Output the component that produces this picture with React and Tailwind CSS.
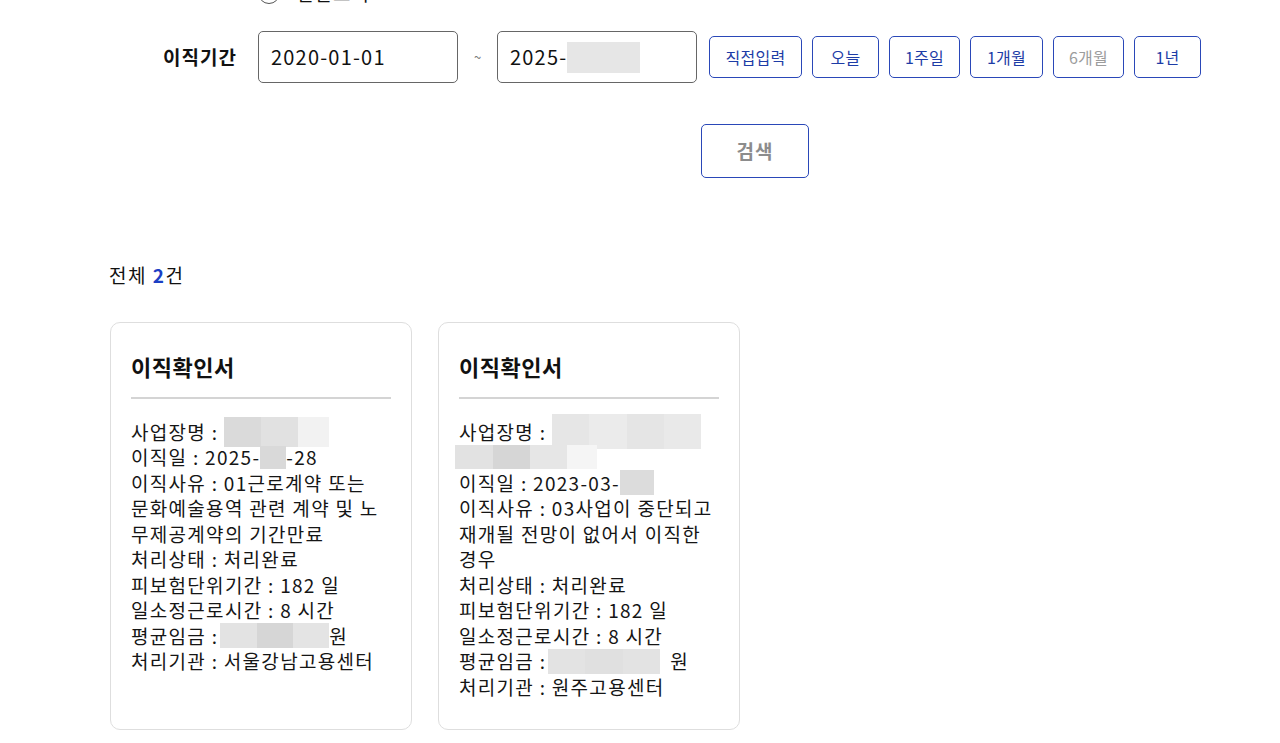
import React from 'react';

const font = "font-['Noto_Sans_CJK_KR','Noto_Sans',sans-serif]";

function Mosaic({ parts, h = 'h-[30px]', className = '' }) {
  return (
    <span className={`inline-flex shrink-0 ${h} ${className}`}>
      {parts.map(([w, c], i) => (
        <span key={i} className="h-full" style={{ width: w, background: c }} />
      ))}
    </span>
  );
}

function Line({ children, className = '' }) {
  return <div className={`flex h-[25.5px] items-center whitespace-nowrap ${className}`}>{children}</div>;
}

function RangeButton({ label, width, muted }) {
  return (
    <button
      type="button"
      className={`h-[42px] rounded-[5px] border border-[#2a48b8] bg-white text-[16px] tracking-[0.3px] ${
        muted ? 'text-[#9c9c9c]' : 'text-[#1d3ca6]'
      }`}
      style={{ width }}
    >
      {label}
    </button>
  );
}

function Card({ children }) {
  return (
    <div className="w-[302px] rounded-[10px] border border-[#dedede] bg-white px-[20px] pt-[28px] pb-[29px]">
      <h3 className="text-[22px] leading-[30px] font-semibold tracking-[0.5px] text-[#111]">이직확인서</h3>
      <div className="mt-[16px] h-[2px] bg-[#d4d4d4]" />
      <div className="mt-[20px] text-[19px] tracking-[1.3px] text-[#151515]">{children}</div>
    </div>
  );
}

export default function App() {
  const ranges = [
    { label: '직접입력', width: 93 },
    { label: '오늘', width: 67 },
    { label: '1주일', width: 71 },
    { label: '1개월', width: 73 },
    { label: '6개월', width: 71, muted: true },
    { label: '1년', width: 67 },
  ];

  return (
    <div className={`min-h-screen overflow-hidden bg-white ${font} text-[#111]`}>
      {/* radio row, scrolled mostly out of view */}
      <div className="-mt-[19px] flex h-[24px] items-center gap-[16px] pl-[258px]">
        <span className="h-[22px] w-[22px] rounded-full border border-[#555] bg-white" />
        <span className="text-[19px] tracking-[1px]">전산조회</span>
      </div>

      {/* period row */}
      <div className="mt-[26px] flex items-center">
        <label className="ml-[163px] w-[75px] whitespace-nowrap text-[19px] font-bold tracking-[1px]">이직기간</label>
        <div className="ml-[20px] flex h-[52px] w-[200px] items-center rounded-[5px] border border-[#666] px-[12px] text-[20px] tracking-[1.2px]">
          2020-01-01
        </div>
        <span className="w-[39px] text-center text-[13px] text-[#777]">~</span>
        <div className="flex h-[52px] w-[200px] items-center rounded-[5px] border border-[#666] px-[12px] text-[20px] tracking-[1.2px]">
          2025-
          <Mosaic parts={[[73, '#e6e6e6']]} h="h-[31px]" />
        </div>
        <div className="ml-[12px] flex gap-[10px]">
          {ranges.map((r) => (
            <RangeButton key={r.label} {...r} />
          ))}
        </div>
      </div>

      {/* search */}
      <div className="mt-[41px] pl-[701px]">
        <button
          type="button"
          className="h-[54px] w-[108px] rounded-[5px] border border-[#2a48b8] bg-white text-[19px] font-bold tracking-[1px] text-[#8c8c8c]"
        >
          검색
        </button>
      </div>

      {/* result count */}
      <p className="mt-[84px] pl-[109px] text-[19px] leading-[26px] tracking-[1.5px]">
        전체 <span className="font-semibold text-[#1c3fc4]">2</span>건
      </p>

      {/* cards */}
      <div className="mt-[34px] flex items-stretch gap-[26px] pl-[110px]">
        <Card>
          <Line>
            사업장명 :
            <Mosaic className="ml-[6px]" parts={[[37, '#dadada'], [37, '#e1e1e1'], [31, '#f2f2f2']]} />
          </Line>
          <Line>
            이직일 : 2025-
            <Mosaic parts={[[26, '#d9d9d9']]} h="h-[23px]" />
            -28
          </Line>
          <Line>이직사유 : 01근로계약 또는</Line>
          <Line>문화예술용역 관련 계약 및 노</Line>
          <Line>무제공계약의 기간만료</Line>
          <Line>처리상태 : 처리완료</Line>
          <Line>피보험단위기간 : 182 일</Line>
          <Line>일소정근로시간 : 8 시간</Line>
          <Line>
            평균임금 :
            <Mosaic className="ml-[2px]" parts={[[37, '#e3e3e3'], [36, '#d6d6d6'], [36, '#e4e4e4']]} h="h-[25px]" />
            원
          </Line>
          <Line>처리기관 : 서울강남고용센터</Line>
        </Card>

        <Card>
          <Line>
            사업장명 :
            <Mosaic
              className="ml-[6px]"
              parts={[[37, '#e6e6e6'], [38, '#ebebeb'], [37, '#e5e5e5'], [37, '#e9e9e9']]}
              h="h-[35px]"
            />
          </Line>
          <Line className="-ml-[4px]">
            <Mosaic parts={[[38, '#e2e2e2'], [37, '#d6d6d6'], [37, '#e6e6e6'], [30, '#f5f5f5']]} h="h-[24px]" />
          </Line>
          <Line>
            이직일 : 2023-03-
            <Mosaic parts={[[34, '#dcdcdc']]} h="h-[25px]" />
          </Line>
          <Line>이직사유 : 03사업이 중단되고</Line>
          <Line>재개될 전망이 없어서 이직한</Line>
          <Line>경우</Line>
          <Line>처리상태 : 처리완료</Line>
          <Line>피보험단위기간 : 182 일</Line>
          <Line>일소정근로시간 : 8 시간</Line>
          <Line>
            평균임금 :
            <Mosaic
              className="ml-[2px] mr-[10px]"
              parts={[[37, '#e3e3e3'], [38, '#e0e0e0'], [37, '#e3e3e3']]}
              h="h-[25px]"
            />
            원
          </Line>
          <Line>처리기관 : 원주고용센터</Line>
        </Card>
      </div>
    </div>
  );
}
